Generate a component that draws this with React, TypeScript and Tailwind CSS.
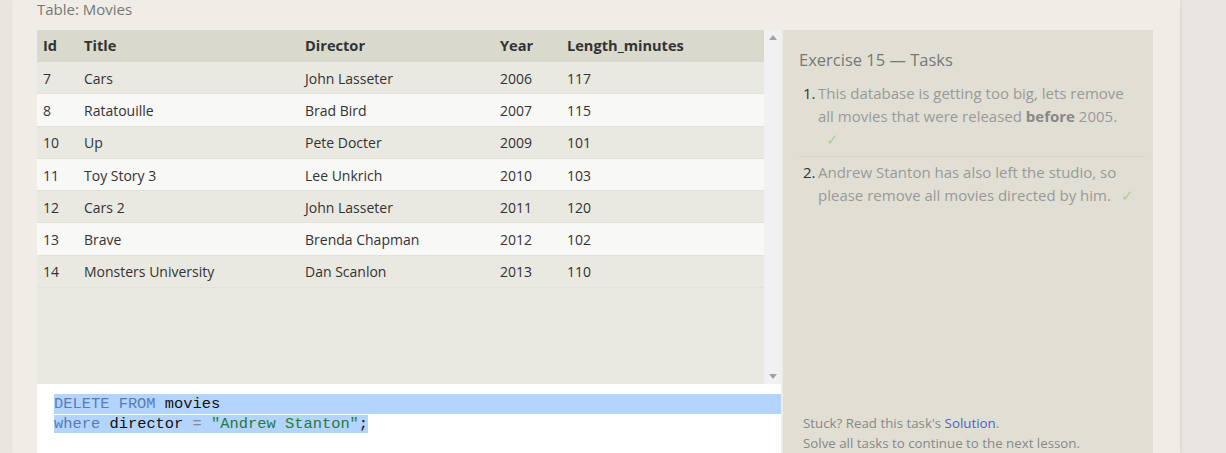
import React from 'react';

const movies = [
  { id: 7, title: 'Cars', director: 'John Lasseter', year: 2006, length: 117 },
  { id: 8, title: 'Ratatouille', director: 'Brad Bird', year: 2007, length: 115 },
  { id: 10, title: 'Up', director: 'Pete Docter', year: 2009, length: 101 },
  { id: 11, title: 'Toy Story 3', director: 'Lee Unkrich', year: 2010, length: 103 },
  { id: 12, title: 'Cars 2', director: 'John Lasseter', year: 2011, length: 120 },
  { id: 13, title: 'Brave', director: 'Brenda Chapman', year: 2012, length: 102 },
  { id: 14, title: 'Monsters University', director: 'Dan Scanlon', year: 2013, length: 110 },
];

const cols = 'grid grid-cols-[41px_221px_195px_67px_1fr]';

export default function App() {
  return (
    <div className="flex h-[453px] w-full overflow-hidden bg-[#e9e6e2] font-['Open_Sans',sans-serif]">
      <div className="w-[12px] shrink-0" />
      <div className="w-[1168px] shrink-0 bg-[#f0ede6] pl-[25px] shadow-[1px_0_3px_rgba(0,0,0,0.08)]">
        {/* Title */}
        <div className="h-[30px] text-[15px] leading-[18px] text-[#777]">Table: Movies</div>

        <div className="flex">
          {/* Left column: table + editor */}
          <div className="w-[744px] shrink-0">
            <div className="flex h-[354px]">
              <div className="flex-1 bg-[#e9e8e1]">
                <div className={`${cols} h-[32px] items-center bg-[#d9d9cd] text-[14.6px] font-bold text-[#333]`}>
                  <div className="pl-[6px]">Id</div>
                  <div className="pl-[6px]">Title</div>
                  <div className="pl-[6px]">Director</div>
                  <div className="pl-[6px]">Year</div>
                  <div className="pl-[6px]">Length_minutes</div>
                </div>
                {movies.map((m, i) => (
                  <div
                    key={m.id}
                    className={`${cols} h-[32.3px] items-center border-b border-[#e2e1da] pt-[1px] text-[14px] text-[#333] ${
                      i % 2 === 0 ? 'bg-[#e9e8e1]' : 'bg-[#f8f8f6]'
                    }`}
                  >
                    <div className="pl-[6px]">{m.id}</div>
                    <div className="pl-[6px]">{m.title}</div>
                    <div className="pl-[6px]">{m.director}</div>
                    <div className="pl-[6px]">{m.year}</div>
                    <div className="pl-[6px]">{m.length}</div>
                  </div>
                ))}
              </div>
              {/* Scrollbar */}
              <div className="flex w-[17px] flex-col items-center justify-between bg-[#f1f1f1] py-[5px]">
                <svg width="8" height="5" viewBox="0 0 8 5">
                  <path d="M4 0L8 5H0z" fill="#a3a3a3" />
                </svg>
                <svg width="8" height="5" viewBox="0 0 8 5">
                  <path d="M0 0H8L4 5z" fill="#a3a3a3" />
                </svg>
              </div>
            </div>

            {/* Editor */}
            <div className="h-[100px] bg-white pt-[10px] font-['Liberation_Mono',monospace] text-[15.4px] leading-[20px]">
              <div className="ml-[17px] bg-[#b3d4fc]">
                <span className="text-[#5a7bb5]">DELETE FROM</span> <span className="text-[#111]">movies</span>
              </div>
              <div className="ml-[17px]">
                <span className="bg-[#b3d4fc]">
                  <span className="text-[#5a7bb5]">where</span> <span className="text-[#111]">director</span>{' '}
                  <span className="text-[#888]">=</span> <span className="text-[#2a7a3a]">"Andrew Stanton"</span>
                  <span className="text-[#111]">;</span>
                </span>
              </div>
            </div>
          </div>

          {/* Right panel */}
          <div className="ml-[2px] flex h-[423px] w-[370px] shrink-0 flex-col bg-[#e1dfd4] pl-[16px] pr-[8px]">
            <div className="pt-[19px] text-[16.5px] leading-[22px] text-[#777]">Exercise 15 — Tasks</div>
            <ol className="mt-[11px] text-[15px] leading-[23px] text-[#999]">
              <li className="flex border-b border-[#d6d4c9] pb-[5px]">
                <span className="w-[19px] shrink-0 pl-[4px] text-[#333]">1.</span>
                <span className="w-[316px]">
                  This database is getting too big, lets remove all movies that were released{' '}
                  <b className="font-bold text-[#888]">before</b> 2005.
                  <span className="block pl-[8px] text-[#a6cfa0]">✓</span>
                </span>
              </li>
              <li className="flex pt-[4px]">
                <span className="w-[19px] shrink-0 pl-[4px] text-[#333]">2.</span>
                <span className="w-[316px]">
                  Andrew Stanton has also left the studio, so please remove all movies directed by him.
                  <span className="ml-[10px] text-[#a6cfa0]">✓</span>
                </span>
              </li>
            </ol>
            <div className="mt-auto pl-[4px] text-[13.3px] leading-[20px] text-[#888]">
              <div>
                Stuck? Read this task's <span className="text-[#4a63c8]">Solution</span>.
              </div>
              <div>Solve all tasks to continue to the next lesson.</div>
            </div>
          </div>
        </div>
      </div>
    </div>
  );
}
